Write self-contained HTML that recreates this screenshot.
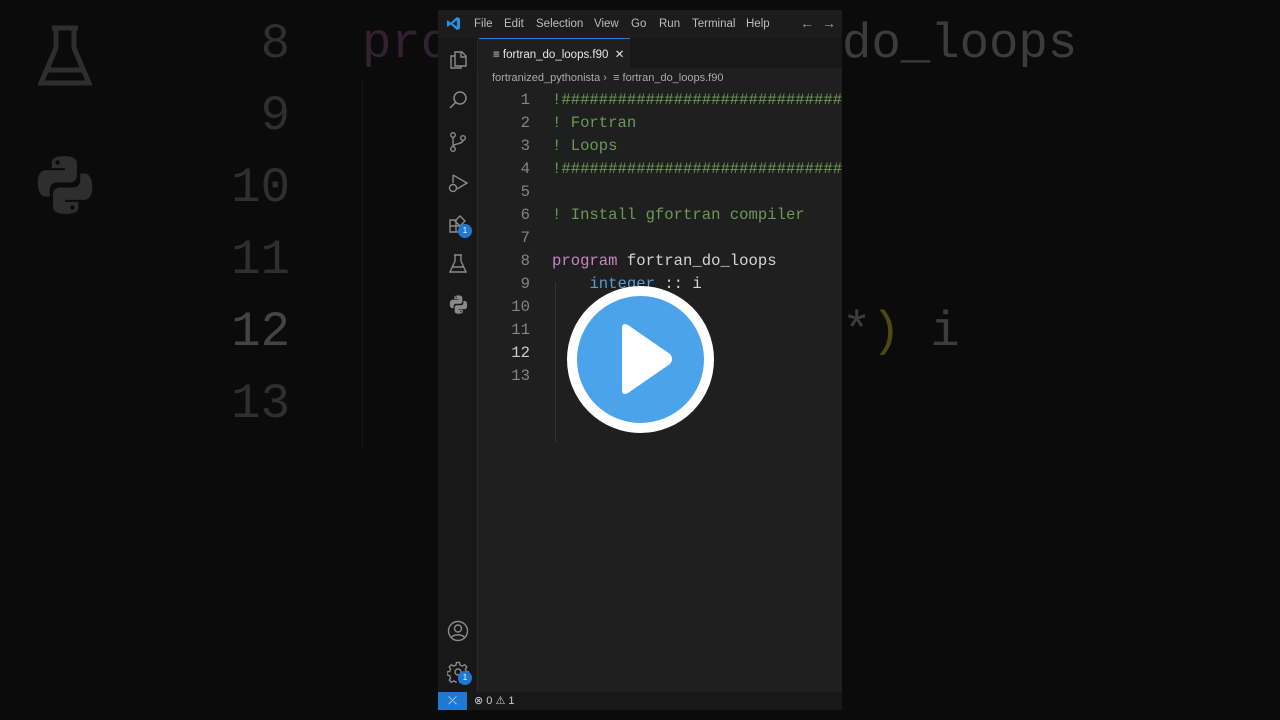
<!DOCTYPE html>
<html><head><meta charset="utf-8"><style>
*{margin:0;padding:0;box-sizing:border-box}
body{width:1280px;height:720px;background:#0b0b0b;position:relative;overflow:hidden;font-family:"Liberation Sans",sans-serif}
.abs{position:absolute}
.mono{font-family:"Liberation Mono","DejaVu Sans Mono",monospace;white-space:pre}
.big{font-size:49px;line-height:72px}
.win{left:438px;top:10px;width:404px;height:700px;background:#1f1f1f}
.title{left:0;top:0;width:404px;height:28px;background:#1c1c1c;color:#bdbdbd;font-size:11.5px}
.title span{position:absolute;top:8px}
.act{left:0;top:28px;width:40px;height:654px;background:#181818;border-right:1px solid #2a2a2a}
.code{font-size:15.6px;line-height:23px}
.ln{color:#858585;text-align:right;width:52px;left:40px}
.c{color:#6a9955}
.k{color:#c586c0}
.t{color:#569cd6}
.w{color:#d4d4d4}
</style></head><body>
<div class="abs mono big" style="left:230px;top:8px;color:#2f2f2f;text-align:right;width:60px">8
9
10
11
<span style="color:#444">12</span>
13</div>
<div class="abs mono big" style="left:362px;top:8px;color:#32222f">pro</div>
<div class="abs mono big" style="left:842px;top:8px;color:#3c3c3c">do_loops</div>
<div class="abs mono big" style="left:842px;top:296px;color:#3c3c3c">*<span style="color:#4e4812">)</span> i</div>
<div class="abs" style="left:362px;top:80px;width:1px;height:370px;background:#161616"></div>
<svg class="abs" style="left:38px;top:25px" width="54" height="62" viewBox="0 0 54 62" fill="none" stroke="#2e2e2e" stroke-width="5"><path d="M14 3h26M18 3v20L3 58h48L36 23V3M10 45h34"/></svg>
<svg class="abs" style="left:32px;top:152px" width="66" height="66" viewBox="0 0 16 16" fill="#2e2e2e"><path d="M7.9 1C4.6 1 4.8 2.4 4.8 2.4v1.5H8v.5H3.5S1.4 4.1 1.4 7.5s1.8 3.3 1.8 3.3h1.1V9.2s-.1-1.800 1.8-1.8h3.1s1.7 0 1.7-1.7V2.8S11.2 1 7.9 1zM6.2 2a.55.55 0 110 1.1.55.55 0 010-1.1zM8.1 15c3.3 0 3.1-1.4 3.1-1.4v-1.5H8v-.5h4.5s2.1.3 2.1-3.1-1.8-3.3-1.8-3.3h-1.1v1.6s.1 1.8-1.8 1.8H6.8s-1.7 0-1.7 1.7v2.9S4.8 15 8.1 15zm1.7-1a.55.55 0 110-1.1.55.55 0 010 1.1z"/></svg>

<div class="abs win">
 <div class="abs title">
  <svg class="abs" style="left:8px;top:6px" width="15" height="15" viewBox="0 0 16 16"><path d="M11.5 1L5 7 2 4.6 1 5.1v5.8l1 .5L5 9l6.5 6 3.5-1.6V2.6z" fill="#2d8ee0"/><path d="M11.5 4.8L7.2 8l4.3 3.2z" fill="#1c1c1c"/></svg>
  <span style="left:36px">File</span><span style="left:66px">Edit</span><span style="left:98px">Selection</span><span style="left:156px">View</span><span style="left:193px">Go</span><span style="left:221px">Run</span><span style="left:254px">Terminal</span><span style="left:308px">Help</span>
  <span style="left:362px;top:5px;font-size:14px;color:#999">←</span><span style="left:384px;top:5px;font-size:14px;color:#999">→</span>
 </div>
 <div class="abs act">
  <svg class="abs" style="left:10px;top:12px" width="20" height="20" viewBox="0 0 20 20" fill="none" stroke="#8a8a8a" stroke-width="1.4"><path d="M7 2h7l4 4v10H7zM13 2v5h5M7 6H3v12h10v-2"/></svg>
  <svg class="abs" style="left:10px;top:52px" width="20" height="20" viewBox="0 0 20 20" fill="none" stroke="#8a8a8a" stroke-width="1.5"><circle cx="12" cy="8" r="6"/><path d="M8 12l-6 6"/></svg>
  <svg class="abs" style="left:10px;top:93px" width="20" height="22" viewBox="0 0 20 22" fill="none" stroke="#8a8a8a" stroke-width="1.4"><circle cx="5" cy="4" r="2.3"/><circle cx="15" cy="7" r="2.3"/><circle cx="5" cy="18" r="2.3"/><path d="M5 6.3v9.4M15 9.3c0 4-10 3-10 6.4"/></svg>
  <svg class="abs" style="left:9px;top:134px" width="22" height="22" viewBox="0 0 22 22" fill="none" stroke="#8a8a8a" stroke-width="1.4"><path d="M6 3l14 8-10 6M6 3v8"/><circle cx="6" cy="16" r="3.5"/></svg>
  <svg class="abs" style="left:10px;top:176px" width="20" height="20" viewBox="0 0 20 20" fill="none" stroke="#8a8a8a" stroke-width="1.4"><path d="M2 6h6v6h6v6H2zM2 12h6v6M12 2l5 5-5 5-5-5z"/></svg>
  <div class="abs" style="left:20px;top:186px;width:14px;height:14px;border-radius:7px;background:#1f78d1;color:#fff;font-size:8px;text-align:center;line-height:14px">1</div>
  <svg class="abs" style="left:11px;top:216px" width="18" height="20" viewBox="0 0 18 20" fill="none" stroke="#8a8a8a" stroke-width="1.4"><path d="M5 1h8M6 1v6L1 18h16L12 7V1M3.5 13h11"/></svg>
  <svg class="abs" style="left:10px;top:256px" width="21" height="21" viewBox="0 0 16 16" fill="#8a8a8a"><path d="M7.9 1C4.6 1 4.8 2.4 4.8 2.4v1.5H8v.5H3.5S1.4 4.1 1.4 7.5s1.8 3.3 1.8 3.3h1.1V9.2s-.1-1.8 1.8-1.8h3.1s1.7 0 1.7-1.7V2.8S11.2 1 7.9 1zM6.2 2a.55.55 0 110 1.1.55.55 0 010-1.1zM8.1 15c3.3 0 3.1-1.4 3.1-1.4v-1.5H8v-.5h4.5s2.1.3 2.1-3.1-1.8-3.3-1.8-3.3h-1.1v1.6s.1 1.8-1.8 1.8H6.8s-1.7 0-1.7 1.7v2.9S4.8 15 8.1 15zm1.7-1a.55.55 0 110-1.1.55.55 0 010 1.1z"/></svg>
  <svg class="abs" style="left:9px;top:582px" width="22" height="22" viewBox="0 0 22 22" fill="none" stroke="#8a8a8a" stroke-width="1.4"><circle cx="11" cy="11" r="9.5"/><circle cx="11" cy="8.5" r="3.5"/><path d="M4.5 17.5c2-3.5 11-3.5 13 0"/></svg>
  <svg class="abs" style="left:9px;top:623px" width="22" height="22" viewBox="0 0 22 22" fill="none" stroke="#8a8a8a" stroke-width="1.4"><circle cx="11" cy="11" r="3"/><path d="M9.5 1.5h3l.6 2.6 2.3 1 2.3-1.4 2.1 2.1-1.4 2.3 1 2.3 2.6.6v3l-2.6.6-1 2.3 1.4 2.3-2.1 2.1-2.3-1.4-2.3 1-.6 2.6h-3l-.6-2.6-2.3-1-2.3 1.4-2.1-2.1 1.4-2.3-1-2.3-2.6-.6v-3l2.6-.6 1-2.3-1.4-2.3 2.1-2.1 2.3 1.4 2.3-1z"/></svg>
  <div class="abs" style="left:20px;top:633px;width:14px;height:14px;border-radius:7px;background:#1f78d1;color:#fff;font-size:8px;text-align:center;line-height:14px">1</div>
 </div>
 <div class="abs" style="left:40px;top:28px;width:364px;height:30px;background:#181818"></div>
 <div class="abs" style="left:41px;top:28px;width:151px;height:30px;background:#1f1f1f;border-top:1px solid #2b7fd1;color:#e6e6e6;font-size:11.5px;padding:8px 0 0 14px">≡ fortran_do_loops.f90 &nbsp;✕</div>
 <div class="abs" style="left:54px;top:62px;color:#a9a9a9;font-size:11px">fortranized_pythonista › &nbsp;≡ fortran_do_loops.f90</div>
 <div class="abs mono code ln" style="top:79px">1
2
3
4
5
6
7
8
9
10
11
<span style="color:#ccc">12</span>
13</div>
 <div class="abs mono code" style="left:114px;top:79px;width:290px;overflow:hidden"><span class="c">!##################################
! Fortran
! Loops
!##################################

! Install gfortran compiler
</span>
<span class="k">program</span> <span class="w">fortran_do_loops</span>
    <span class="t">integer</span> <span class="w">:: i</span>
 

           <span style="color:#d7ba7d">)</span> <span class="w">i</span>
</div>
 <div class="abs" style="left:117px;top:272px;width:1px;height:160px;background:#333"></div>
 <div class="abs" style="left:0;top:682px;width:404px;height:18px;background:#181818"></div>
 <div class="abs" style="left:0;top:682px;width:29px;height:18px;background:#1f78d1;color:#fff;font-size:11px;text-align:center;line-height:18px">⤫</div>
 <div class="abs" style="left:36px;top:684px;color:#ccc;font-size:11px">⊗ 0 ⚠ 1</div>
</div>
<div class="abs" style="left:567px;top:286px;width:147px;height:147px;border-radius:50%;background:#fff"></div>
<div class="abs" style="left:577px;top:296px;width:127px;height:127px;border-radius:50%;background:#4ba3ec"></div>
<svg class="abs" style="left:618px;top:322px" width="56" height="74" viewBox="0 0 56 74"><path d="M4 6Q4 0 10 3L52 32Q56 37 52 42L10 71Q4 74 4 68Z" fill="#fff"/></svg>
</body></html>
